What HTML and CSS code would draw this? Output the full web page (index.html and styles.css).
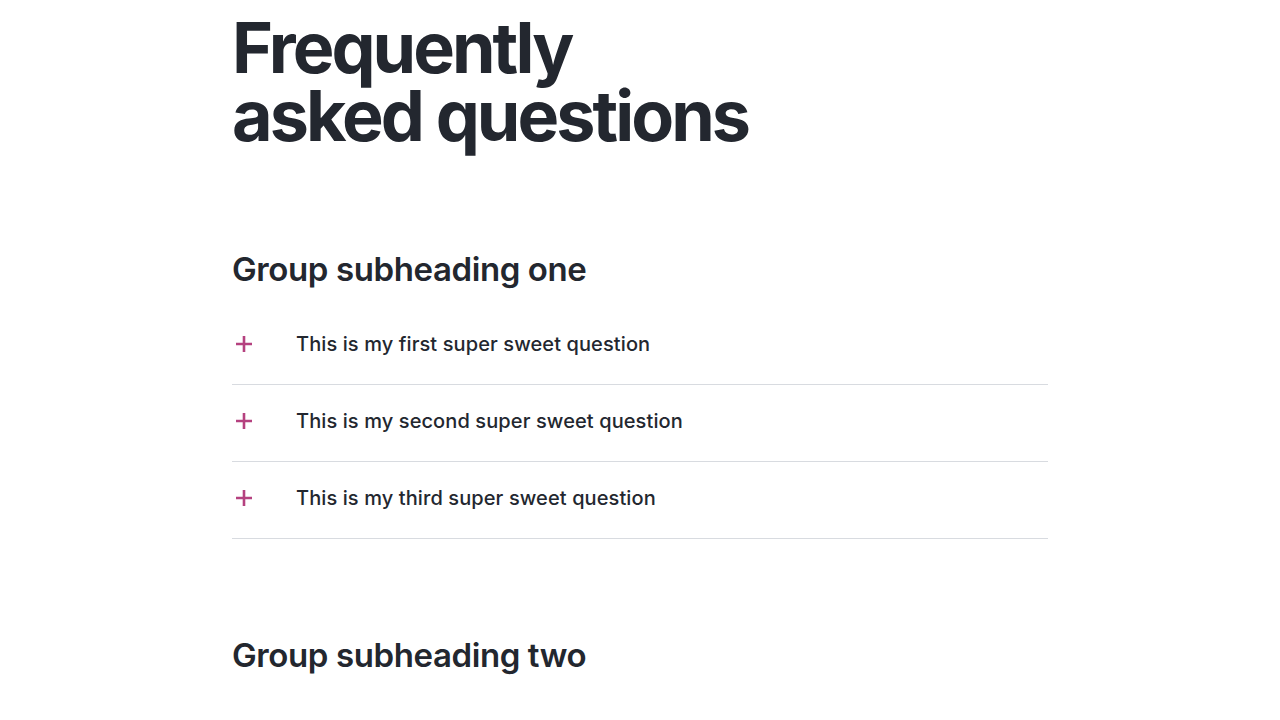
FILE: index.html
```html
<!DOCTYPE html>
<html lang="en">
<head>
<meta charset="utf-8">
<link rel="stylesheet" href="styles.css">
</head>
<body>
<main class="faq">
  <h1 class="faq-title">Frequently<br>asked questions</h1>
  <section class="group">
    <h2 class="group-title">Group subheading one</h2>
    <ul class="list">
      <li class="item"><span class="plus" aria-hidden="true"><svg width="16" height="16" viewBox="0 0 16 16"><path d="M8 0v16M0 8h16" stroke="currentColor" stroke-width="2.6"/></svg></span><span class="q">This is my first super sweet question</span></li>
      <li class="item"><span class="plus" aria-hidden="true"><svg width="16" height="16" viewBox="0 0 16 16"><path d="M8 0v16M0 8h16" stroke="currentColor" stroke-width="2.6"/></svg></span><span class="q">This is my second super sweet question</span></li>
      <li class="item"><span class="plus" aria-hidden="true"><svg width="16" height="16" viewBox="0 0 16 16"><path d="M8 0v16M0 8h16" stroke="currentColor" stroke-width="2.6"/></svg></span><span class="q">This is my third super sweet question</span></li>
    </ul>
  </section>
  <section class="group">
    <h2 class="group-title">Group subheading two</h2>
  </section>
</main>
</body>
</html>
```
FILE: styles.css
```css
html, body { margin: 0; padding: 0; background: #fff; }
body { font-family: Inter, "Noto Sans", sans-serif; color: #23272f; }
.faq { width: 816px; margin: 0 auto; padding-top: 14px; }
.faq-title {
  margin: 0;
  font-size: 70px;
  line-height: 68px;
  font-weight: 700;
  letter-spacing: -0.042em;
}
.group { margin-top: 99px; }
.group + .group { margin-top: 96px; }
.group-title {
  margin: 0 0 19px;
  font-size: 33px;
  line-height: 40px;
  font-weight: 600;
  letter-spacing: -0.012em;
}
.list { list-style: none; margin: 0; padding: 0; }
.item {
  display: flex;
  align-items: center;
  padding: 22px 0 26px;
  border-bottom: 1px solid #d8dbe0;
  font-size: 20px;
  line-height: 28px;
  font-weight: 500;
}
.plus { display: flex; width: 64px; color: #b5417f; padding-left: 4px; box-sizing: border-box; }
.q { letter-spacing: 0.005em; }
```
